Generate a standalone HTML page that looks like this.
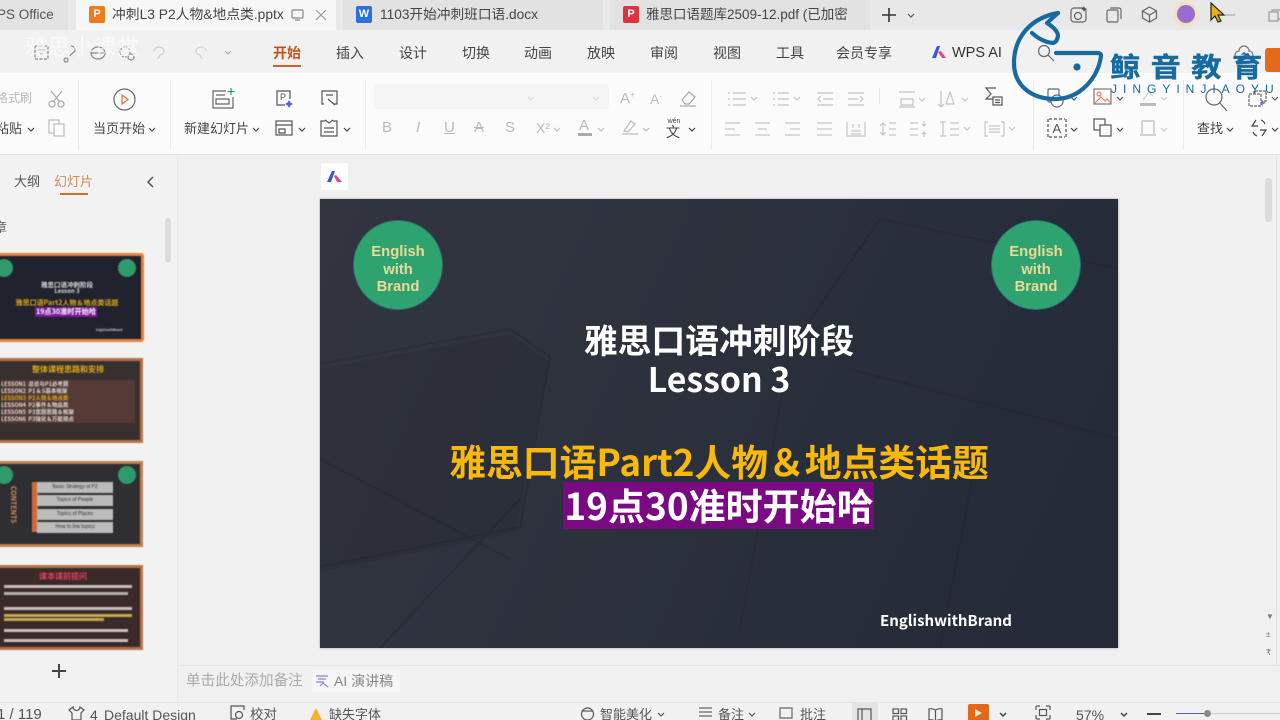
<!DOCTYPE html>
<html lang="zh">
<head>
<meta charset="utf-8">
<style>
html,body{margin:0;padding:0;width:1280px;height:720px;overflow:hidden;background:#f0f0f0}
body{position:relative;font-family:"Liberation Sans","Noto Sans CJK SC",sans-serif;color:#444;filter:blur(.35px)}
.a{position:absolute;white-space:nowrap}
.t{position:absolute;white-space:nowrap;font-size:14px;line-height:20px;color:#444}
.g{color:#b8b8b8}
svg{position:absolute;overflow:visible;fill:none;stroke:#666;stroke-width:1.2}
.sl{font-family:"Noto Sans CJK SC","Liberation Sans",sans-serif;font-weight:700;text-align:center;white-space:nowrap;position:absolute}
.th{position:absolute;left:-10px;width:153px;background:#2d2b30;border:3px solid #c08050;box-sizing:border-box;overflow:hidden;filter:blur(.5px)}
.tt{position:absolute;white-space:nowrap;font-family:"Noto Sans CJK SC","Liberation Sans",sans-serif;font-weight:700}
.dot{position:absolute;width:18px;height:18px;border-radius:50%;background:#2f9a6c}
</style>
</head>
<body>
<!-- tab bar -->
<div class="a" style="left:0;top:0;width:1280px;height:30px;background:#e9e8e8"></div>
<div class="a" style="left:0;top:0;width:68px;height:30px;background:#e3e3e3"></div>
<div class="t" style="left:-3px;top:5px;font-size:13.5px;color:#555">PS Office</div>
<div class="a" style="left:76px;top:0;width:260px;height:30px;background:#f6f6f6"></div>
<div class="a" style="left:89px;top:6px;width:16px;height:17px;background:#ee7a1c;border-radius:2px;color:#fff;font:700 11px/17px 'Liberation Sans';text-align:center">P</div>
<div class="t" style="left:112px;top:5px;font-size:13.800px">冲刺L3 P2人物&amp;地点类.pptx</div>
<svg style="left:291px;top:9px" width="14" height="12"><rect x="1" y="1" width="11" height="8" rx="1" stroke="#888"/><path d="M4 11h5" stroke="#888"/></svg>
<svg style="left:315px;top:9px" width="12" height="12"><path d="M1 1l10 10M11 1L1 11" stroke="#999"/></svg>
<div class="a" style="left:343px;top:0;width:260px;height:30px;background:#e2e2e2"></div>
<div class="a" style="left:356px;top:6px;width:16px;height:17px;background:#2a6fdb;border-radius:2px;color:#fff;font:700 11px/17px 'Liberation Sans';text-align:center">W</div>
<div class="t" style="left:380px;top:5px;font-size:13.700px">1103开始冲刺班口语.docx</div>
<div class="a" style="left:610px;top:0;width:260px;height:30px;background:#e2e2e2"></div>
<div class="a" style="left:623px;top:6px;width:16px;height:17px;background:#e0313f;border-radius:2px;color:#fff;font:700 11px/17px 'Liberation Sans';text-align:center">P</div>
<div class="t" style="left:646px;top:5px;font-size:13.500px;width:212px;overflow:hidden">雅思口语题库2509-12.pdf (已加密</div>
<svg style="left:881px;top:7px" width="16" height="16"><path d="M8 1v14M1 8h14" stroke="#333" stroke-width="1.6"/></svg>
<svg style="left:907px;top:13px" width="8" height="5"><path d="M1 1l3 3 3-3" stroke="#555"/></svg>
<!-- right top icons -->
<svg style="left:1070px;top:5px" width="18" height="18"><rect x="1" y="3" width="15" height="14" rx="3"/><circle cx="8" cy="11" r="3.5"/><path d="M14 1l1 2 2 1-2 1-1 2-1-2-2-1 2-1z" fill="#555" stroke="none"/></svg>
<svg style="left:1106px;top:7px" width="16" height="16"><rect x="1" y="3" width="11" height="12" rx="1.5"/><path d="M4 1h9a2 2 0 0 1 2 2v9"/></svg>
<svg style="left:1141px;top:6px" width="17" height="17"><path d="M8.5 1l7 4v7l-7 4-7-4V5zM1.5 5l7 4 7-4M8.5 9v7"/></svg>
<div class="a" style="left:1173px;top:1px;width:26px;height:26px;border-radius:50%;background:#f0e2c8"></div>
<div class="a" style="left:1177px;top:5px;width:18px;height:18px;border-radius:50%;background:#9a6cd0"></div>
<svg style="left:1210px;top:2px" width="26" height="22"><path d="M1 1l0 17 4-4 3 6 3-1-3-6h6z" fill="#eab308" stroke="#222" stroke-width="1.2"/><path d="M15 13h10" stroke="#aaa"/></svg>
<svg style="left:1268px;top:9px" width="14" height="14"><rect x="1" y="3" width="9" height="9" stroke="#999"/><path d="M4 3V1h9v9h-3" stroke="#999"/></svg>

<!-- menu bar -->
<div class="a" style="left:0;top:30px;width:1280px;height:43px;background:#f1f1f1;border-bottom:1px solid #e2e2e2"></div>
<svg style="left:34px;top:45px" width="16" height="16"><rect x="1" y="1" width="13" height="13" stroke="#888" stroke-dasharray="3 1.5"/><path d="M4 5h7M6 9h3" stroke="#888"/></svg>
<svg style="left:63px;top:45px" width="16" height="16"><path d="M8 1a4 4 0 0 1 4 4c0 3-4 3-5 6M3 13a2 2 0 1 0 .1 0" stroke="#888"/></svg>
<svg style="left:89px;top:45px" width="18" height="16"><ellipse cx="9" cy="8" rx="7" ry="6" stroke="#888"/><path d="M2 8h14" stroke="#888"/></svg>
<svg style="left:118px;top:45px" width="18" height="16"><circle cx="7" cy="7" r="5" stroke="#999" stroke-dasharray="2 1"/><circle cx="13" cy="12" r="3" stroke="#888"/></svg>
<svg style="left:152px;top:46px" width="14" height="14"><path d="M2 5a5 4 0 1 1 6 4L6 13" stroke="#ccc"/></svg>
<svg style="left:194px;top:46px" width="14" height="14"><path d="M12 5a5 4 0 1 0-6 4l2 4" stroke="#d2d2d2"/></svg>
<svg style="left:224px;top:50px" width="8" height="5"><path d="M1 1l3 3 3-3" stroke="#aaa"/></svg>
<div class="a" style="left:25px;top:35px;font-size:22px;line-height:26px;color:#fff;opacity:.6;letter-spacing:1px">雅思小课堂</div>
<div class="t" style="left:273px;top:43px;font-weight:700;color:#c4511d">开始</div>
<div class="a" style="left:273px;top:65px;width:28px;height:2px;background:#c9632a"></div>
<div class="t" style="left:336px;top:43px">插入</div>
<div class="t" style="left:399px;top:43px">设计</div>
<div class="t" style="left:462px;top:43px">切换</div>
<div class="t" style="left:524px;top:43px">动画</div>
<div class="t" style="left:587px;top:43px">放映</div>
<div class="t" style="left:650px;top:43px">审阅</div>
<div class="t" style="left:713px;top:43px">视图</div>
<div class="t" style="left:776px;top:43px">工具</div>
<div class="t" style="left:836px;top:43px">会员专享</div>
<svg style="left:931px;top:45px" width="16" height="14" ><path d="M1 13L6 1h3l-4 12z" fill="#3a55d8" stroke="none"/><path d="M7 7l3-1 5 7h-4z" fill="#e0488c" stroke="none"/></svg>
<div class="t" style="left:952px;top:43px;color:#333;font-size:14.500px">WPS AI</div>
<svg style="left:1037px;top:44px" width="18" height="18"><circle cx="7" cy="7" r="5.5"/><path d="M11 11l6 6"/></svg>
<svg style="left:1234px;top:45px" width="20" height="18"><path d="M5 14a4 4 0 0 1 0-8 5 5 0 0 1 10 0 4 4 0 0 1 0 8z" stroke="#777"/><path d="M10 14V8M7.500 10L10 7.500l2.500 2.500" stroke="#3a6fd8"/></svg>
<div class="a" style="left:1265px;top:48px;width:20px;height:24px;background:#e26a1a;border-radius:3px"></div>

<!-- ribbon -->
<div class="a" style="left:0;top:73px;width:1280px;height:81px;background:#fbfbfb;border-bottom:1px solid #e2e2e2"></div>
<div class="a" style="left:78px;top:80px;width:1px;height:70px;background:#ebebeb"></div>
<div class="a" style="left:170px;top:80px;width:1px;height:70px;background:#ebebeb"></div>
<div class="a" style="left:365px;top:80px;width:1px;height:70px;background:#ebebeb"></div>
<div class="a" style="left:711px;top:80px;width:1px;height:70px;background:#ebebeb"></div>
<div class="a" style="left:1033px;top:80px;width:1px;height:70px;background:#ebebeb"></div>
<div class="a" style="left:1183px;top:80px;width:1px;height:70px;background:#ebebeb"></div>
<div class="a" style="left:879px;top:88px;width:1px;height:16px;background:#e4e4e4"></div>

<div class="t g" style="left:-4px;top:88px;font-size:12px">格式刷</div>
<svg style="left:48px;top:90px" width="18" height="18"><path d="M3 1l9 11M14 1L5 12" stroke="#aaa"/><circle cx="4" cy="14" r="3" stroke="#aaa"/><circle cx="13" cy="14" r="3" stroke="#aaa"/></svg>
<div class="t" style="left:-4px;top:119px;font-size:13px">粘贴</div>
<svg style="left:27px;top:127px" width="8" height="5"><path d="M1 1l3 3 3-3" stroke="#444"/></svg>
<svg style="left:48px;top:119px" width="18" height="18"><rect x="1" y="1" width="10" height="13" stroke="#bbb"/><rect x="6" y="5" width="10" height="12" fill="#fbfbfb" stroke="#bbb"/></svg>

<svg style="left:113px;top:88px" width="23" height="23"><circle cx="11.500" cy="11.500" r="10.500" stroke="#666"/><path d="M9 7l6 4.500-6 4.500z" stroke="#e4703a"/></svg>
<div class="t" style="left:93px;top:119px;font-size:13px">当页开始</div>
<svg style="left:148px;top:127px" width="8" height="5"><path d="M1 1l3 3 3-3" stroke="#444"/></svg>

<svg style="left:212px;top:88px" width="24" height="22"><path d="M14 3H1v17h20V9" stroke="#666"/><path d="M4 7h9M4 11h13v5H4z" stroke="#666"/><path d="M19 0v7M15.500 3.500h7" stroke="#2f9a6c"/></svg>
<div class="t" style="left:184px;top:119px;font-size:13px">新建幻灯片</div>
<svg style="left:252px;top:127px" width="8" height="5"><path d="M1 1l3 3 3-3" stroke="#444"/></svg>
<svg style="left:275px;top:89px" width="19" height="19"><path d="M15 10V2H2v14h8" stroke="#555"/><text x="5" y="11" font-size="9" fill="#555" stroke="none">P</text><path d="M14 11l1.500 2.500L18 15l-2.500 1.500L14 19l-1.500-2.500L10 15l2.500-1.500z" fill="#5a63d8" stroke="none"/></svg>
<svg style="left:320px;top:89px" width="19" height="19"><path d="M4 15H2V2h15v13h-3M6 6h7M8 10l7 6" stroke="#555"/></svg>
<svg style="left:275px;top:120px" width="18" height="16"><rect x="1" y="1" width="16" height="14" stroke="#555"/><path d="M1 5h16M4 9h6v4H4z" stroke="#555"/></svg>
<svg style="left:298px;top:127px" width="8" height="5"><path d="M1 1l3 3 3-3" stroke="#444"/></svg>
<svg style="left:320px;top:119px" width="18" height="18"><path d="M5 2H1v15h16V2h-4M5 1l4 3 4-3M4 9h10M4 13h10" stroke="#555"/></svg>
<svg style="left:343px;top:127px" width="8" height="5"><path d="M1 1l3 3 3-3" stroke="#444"/></svg>

<div class="a" style="left:374px;top:84px;width:235px;height:25px;background:#f5f5f5;border-radius:3px"></div>
<svg style="left:527px;top:96px" width="8" height="5"><path d="M1 1l3 3 3-3" stroke="#ddd"/></svg>
<svg style="left:592px;top:96px" width="8" height="5"><path d="M1 1l3 3 3-3" stroke="#ddd"/></svg>
<div class="t g" style="left:382px;top:118px;font-size:15px">B</div>
<div class="t g" style="left:416px;top:118px;font-size:15px;font-style:italic">I</div>
<div class="t g" style="left:444px;top:118px;font-size:15px;text-decoration:underline">U</div>
<div class="t g" style="left:474px;top:118px;font-size:15px;text-decoration:line-through">A</div>
<div class="t g" style="left:505px;top:118px;font-size:15px">S</div>
<div class="t g" style="left:536px;top:118px;font-size:14px">X²</div>
<svg style="left:553px;top:127px" width="8" height="5"><path d="M1 1l3 3 3-3" stroke="#bbb"/></svg>
<div class="t g" style="left:579px;top:116px;font-size:15px">A</div>
<div class="a" style="left:578px;top:133px;width:14px;height:3px;background:#aaa"></div>
<svg style="left:597px;top:127px" width="8" height="5"><path d="M1 1l3 3 3-3" stroke="#bbb"/></svg>
<svg style="left:621px;top:119px" width="18" height="17"><path d="M3 12L10 2l4 3-7 8zM1 15h16" stroke="#bbb"/></svg>
<svg style="left:642px;top:127px" width="8" height="5"><path d="M1 1l3 3 3-3" stroke="#bbb"/></svg>
<div class="t" style="left:620px;top:89px;font-size:15px;color:#bbb">A<sup style="font-size:8px;line-height:0">+</sup></div>
<div class="t" style="left:650px;top:89px;font-size:14px;color:#bbb">A<sup style="font-size:8px;line-height:0">-</sup></div>
<svg style="left:679px;top:89px" width="18" height="18"><path d="M3 11l7-8 6 5-6 7H6z" stroke="#aaa"/><path d="M1 17h16" stroke="#aaa"/></svg>
<div class="a" style="left:666px;top:118px;font-size:7px;line-height:8px;color:#444;width:16px;text-align:center">wén</div>
<div class="a" style="left:666px;top:124px;font-size:14px;line-height:16px;color:#444">文</div>
<svg style="left:688px;top:127px" width="8" height="5"><path d="M1 1l3 3 3-3" stroke="#444"/></svg>

<!-- paragraph icons row 1 -->
<svg style="left:727px;top:90px" width="140" height="18">
<g stroke="#c4c4c4"><path d="M1 3h2M1 9h2M1 15h2M6 3h13M6 9h13M6 15h13"/><path d="M24 7l3 3 3-3"/>
<path d="M46 3h2M46 9h2M46 15h2M51 3h11M51 9h11M51 15h11"/><path d="M67 7l3 3 3-3"/>
<path d="M90 3h16M96 9h10M90 15h16M94 6l-3 3 3 3"/>
<path d="M121 3h16M121 9h10M121 15h16M133 6l3 3-3 3"/></g></svg>
<svg style="left:898px;top:90px" width="80" height="18"><g stroke="#c4c4c4"><path d="M1 2h16M3 9h12v6H3zM1 17h16"/><path d="M21 8l3 3 3-3"/><path d="M43 1v16M40 14l3 3 3-3M52 2l-4 12h8z"/><path d="M64 8l3 3 3-3"/></g></svg>
<svg style="left:984px;top:87px" width="20" height="20"><path d="M12 1H2l5 6-5 5h7" stroke="#555"/><rect x="9" y="10" width="9" height="8" stroke="#555"/><path d="M11 13h5M11 15.500h5" stroke="#555"/></svg>
<!-- row 2 -->
<svg style="left:725px;top:120px" width="295" height="18"><g stroke="#c6c6c6"><path d="M0 3h15M0 9h10M0 15h15"/><path d="M30 3h15M33 9h9M30 15h15"/><path d="M60 3h15M65 9h10M60 15h15"/><path d="M92 3h15M92 9h15M92 15h15"/>
<path d="M122 2v14h18V2M128 4v4M134 4v4M126 11h10M126 14h10"/>
<path d="M158 4v10M155 6l3-3 3 3M155 12l3 3 3-3M164 3h7M164 9h7M164 15h7"/>
<path d="M185 3h8M185 9h8M185 15h8M199 1v5M197 4l2 2 2-2M199 17v-5M197 14l2-2 2 2"/>
<path d="M218 2v14M215 2h6M215 16h6M225 3h9M225 9h9M225 15h9M239 7l3 3 3-3"/>
<path d="M263 2h-3v14h3M276 2h3v14h-3M264 6h11M264 9h11M264 12h11"/><path d="M284 7l3 3 3-3"/></g></svg>

<!-- right ribbon -->
<svg style="left:1046px;top:87px" width="24" height="22"><rect x="2" y="2" width="11" height="13" rx="1" stroke="#666"/><circle cx="11" cy="14" r="6" fill="#fbfbfb" stroke="#666"/></svg>
<svg style="left:1070px;top:96px" width="8" height="5"><path d="M1 1l3 3 3-3" stroke="#555"/></svg>
<svg style="left:1093px;top:88px" width="20" height="18"><rect x="1" y="1" width="17" height="15" stroke="#777"/><circle cx="6" cy="6" r="2" stroke="#e58060"/><path d="M2 15l6-6 4 4 2-2 4 4" stroke="#e58060"/></svg>
<svg style="left:1116px;top:96px" width="8" height="5"><path d="M1 1l3 3 3-3" stroke="#555"/></svg>
<div class="a" style="left:1140px;top:103px;width:16px;height:3px;background:#bbb"></div>
<svg style="left:1141px;top:90px" width="14" height="12"><path d="M2 10l6-8 4 4" stroke="#ccc"/></svg>
<svg style="left:1160px;top:96px" width="8" height="5"><path d="M1 1l3 3 3-3" stroke="#ccc"/></svg>
<svg style="left:1205px;top:88px" width="24" height="24"><circle cx="9" cy="9" r="8" stroke="#666"/><path d="M15 15l7 8" stroke="#666"/></svg>
<svg style="left:1248px;top:90px" width="20" height="18"><path d="M6 4V1h12v10h-4M1 4h12v12H1z" stroke="#666" stroke-dasharray="3 1"/><path d="M13 10l5 3-3 1-1 3z" fill="#7b6ad8" stroke="none"/></svg>
<svg style="left:1271px;top:96px" width="8" height="5"><path d="M1 1l3 3 3-3" stroke="#555"/></svg>
<svg style="left:1047px;top:118px" width="20" height="20"><path d="M2 1h16M2 19h16M1 1v18M19 1v18" stroke="#555" stroke-dasharray="3 2"/><text x="5.500" y="15" font-size="13" fill="#555" stroke="none">A</text></svg>
<svg style="left:1070px;top:127px" width="8" height="5"><path d="M1 1l3 3 3-3" stroke="#444"/></svg>
<svg style="left:1093px;top:118px" width="20" height="20"><rect x="1" y="1" width="11" height="11" stroke="#555"/><rect x="7" y="7" width="11" height="11" fill="#fbfbfb" stroke="#555"/></svg>
<svg style="left:1116px;top:127px" width="8" height="5"><path d="M1 1l3 3 3-3" stroke="#444"/></svg>
<svg style="left:1139px;top:119px" width="18" height="18"><path d="M3 15V2h12v13M1 16h16" stroke="#c4c4c4" stroke-width="1.400"/></svg>
<svg style="left:1160px;top:127px" width="8" height="5"><path d="M1 1l3 3 3-3" stroke="#ccc"/></svg>
<div class="t" style="left:1197px;top:119px;font-size:13px">查找</div>
<svg style="left:1226px;top:127px" width="8" height="5"><path d="M1 1l3 3 3-3" stroke="#444"/></svg>
<svg style="left:1250px;top:118px" width="18" height="20"><path d="M6 2L2 8h6M12 18l4-6h-6M3 14a7 7 0 0 0 4 4M15 6a7 7 0 0 0-4-4" stroke="#444"/></svg>
<svg style="left:1271px;top:127px" width="8" height="5"><path d="M1 1l3 3 3-3" stroke="#444"/></svg>

<!-- left pane -->
<div class="a" style="left:0;top:155px;width:177px;height:547px;background:#f2f2f2"></div>
<div class="a" style="left:177px;top:155px;width:1px;height:547px;background:#e9e9e9"></div>
<div class="t" style="left:14px;top:172px;font-size:13px;color:#555">大纲</div>
<div class="t" style="left:54px;top:172px;font-size:13px;color:#d08a5c">幻灯片</div>
<div class="a" style="left:60px;top:193px;width:28px;height:2px;background:#c96f35"></div>
<svg style="left:146px;top:176px" width="8" height="12"><path d="M7 1L2 6l5 5" stroke="#555" stroke-width="1.500"/></svg>
<div class="t" style="left:-6px;top:218px;font-size:13px;color:#666">章</div>
<div class="a" style="left:165px;top:218px;width:6px;height:45px;background:#dcdcdc;border-radius:3px"></div>

<!-- thumb 1 -->
<div class="th" style="top:253px;height:89px;width:154px;border:3px solid #e8813a;border-radius:3px;background:#20232e">
  <div class="dot" style="left:2px;top:3px"></div><div class="dot" style="left:125px;top:3px"></div>
  <div class="tt" style="left:0;width:148px;top:23px;font-size:6.500px;line-height:10px;color:#ddd;text-align:center">雅思口语冲刺阶段</div>
  <div class="tt" style="left:0;width:148px;top:30px;font-size:6px;line-height:10px;color:#ddd;text-align:center">Lesson 3</div>
  <div class="tt" style="left:0;width:148px;top:42px;font-size:7px;line-height:10px;color:#e0a814;text-align:center">雅思口语Part2人物＆地点类话题</div>
  <div class="tt" style="left:42px;width:62px;top:51px;font-size:7.200px;line-height:10px;color:#fff;background:#7a1a9a;text-align:center">19点30准时开始哈</div>
  <div class="tt" style="left:103px;top:72px;font-size:3px;line-height:5px;color:#ccc">EnglishwithBrand</div>
</div>
<!-- thumb 2 -->
<div class="th" style="top:358px;height:85px;border:3px solid #b5734a;background:#37302f">
  <div class="tt" style="left:25px;width:100px;top:3px;font-size:8px;line-height:11px;color:#e0a814;text-align:center">整体课程思路和安排</div>
  <div class="a" style="left:8px;top:19px;width:134px;height:43px;background:#553b36"></div>
  <div class="tt" style="left:8px;top:20px;font-size:5.500px;line-height:7px;color:#ddd;white-space:pre">LESSON1  总论与P1必考题
LESSON2  P1 &amp; S基本框架
<span style="color:#e0a814">LESSON3  P2人物＆地点类</span>
LESSON4  P2事件＆物品类
LESSON5  P3宽题思路＆框架
LESSON6  P3强化＆万能观点</div>
</div>
<!-- thumb 3 -->
<div class="th" style="top:461px;height:86px;border:3px solid #c08050;background:#2f2e33">
  <div class="dot" style="left:2px;top:2px"></div><div class="dot" style="left:125px;top:2px"></div>
  <div class="tt" style="left:15px;top:22px;font-size:7px;line-height:9px;color:#c98a5a;writing-mode:vertical-rl">CONTENTS</div>
  <div class="a" style="left:39px;top:18px;width:6px;height:50px;background:#d06a3a"></div>
  <div class="a" style="left:44px;top:18px;width:76px;height:11px;background:#bbb;font:5px/11px 'Liberation Sans';color:#333;text-align:center">Basic Strategy of P2</div>
  <div class="a" style="left:44px;top:31px;width:76px;height:11px;background:#bbb;font:5px/11px 'Liberation Sans';color:#333;text-align:center">Topics of People</div>
  <div class="a" style="left:44px;top:45px;width:76px;height:11px;background:#bbb;font:5px/11px 'Liberation Sans';color:#333;text-align:center">Topics of Places</div>
  <div class="a" style="left:44px;top:58px;width:76px;height:11px;background:#bbb;font:5px/11px 'Liberation Sans';color:#333;text-align:center">How to link topics</div>
</div>
<!-- thumb 4 -->
<div class="th" style="top:565px;height:85px;border:3px solid #b5734a;background:#3a2a2a">
  <div class="tt" style="left:25px;width:90px;top:3px;font-size:8px;line-height:11px;color:#e0405a;text-align:center">课本课前提问</div>
  <div class="a" style="left:11px;top:17px;width:128px;height:3px;background:#c8bebe"></div>
  <div class="a" style="left:11px;top:24px;width:124px;height:3px;background:#b8aeae"></div>
  <div class="a" style="left:11px;top:39px;width:128px;height:3px;background:#c8bebe"></div>
  <div class="a" style="left:11px;top:46px;width:128px;height:3px;background:#c4a850"></div>
  <div class="a" style="left:11px;top:50px;width:100px;height:3px;background:#c4a850"></div>
  <div class="a" style="left:11px;top:61px;width:124px;height:3px;background:#c8bebe"></div>
  <div class="a" style="left:11px;top:71px;width:124px;height:3px;background:#c8bebe"></div>
</div>
<svg style="left:52px;top:664px" width="14" height="14"><path d="M7 0v14M0 7h14" stroke="#444" stroke-width="2"/></svg>

<!-- canvas -->
<div class="a" style="left:321px;top:163px;width:27px;height:27px;background:#fdfdfd;border-radius:2px"></div>
<svg style="left:326px;top:170px" width="17" height="13"><path d="M1 12L6 1h3L5 12z" fill="#3a55d8" stroke="none"/><path d="M8 6l2-1 6 7h-5z" fill="#e0488c" stroke="none"/></svg>

<!-- slide -->
<div class="a" style="left:320px;top:199px;width:798px;height:449px;overflow:hidden;background:linear-gradient(115deg,#32353f 0%,#2d323d 35%,#272d3a 70%,#242a38 100%);box-shadow:0 0 2px #999">
  <svg style="left:0;top:0" width="798" height="449"><g stroke="#20232c" stroke-width="2" opacity=".28">
    <path d="M0 165L190 130l40 28-30 170-200 40"/>
    <path d="M420 430L470 150 560 20 800 70"/>
    <path d="M60 449L200 300M0 260L190 360"/>
    <path d="M530 170L800 240M620 449l40-210"/></g>
    <path d="M0 170L190 135l40 28-35 170-195 40z" fill="#23262f" stroke="none" opacity=".22"/>
  </svg>
  <div class="a" style="left:34px;top:22px;width:88px;height:88px;border-radius:50%;background:#2fa36f;box-shadow:0 0 0 1px #2b6f70;color:#ecd996;font:700 14.800px/17.700px 'Liberation Sans';text-align:center;white-space:normal;padding-top:23px;box-sizing:border-box">English<br>with<br>Brand</div>
  <div class="a" style="left:672px;top:22px;width:88px;height:88px;border-radius:50%;background:#2fa36f;box-shadow:0 0 0 1px #2b6f70;color:#ecd996;font:700 14.800px/17.700px 'Liberation Sans';text-align:center;white-space:normal;padding-top:23px;box-sizing:border-box">English<br>with<br>Brand</div>
  <div class="sl" style="left:0;width:798px;top:116px;font-size:33.800px;line-height:48px;color:#fff">雅思口语冲刺阶段</div>
  <div class="sl" style="left:0;width:798px;top:155px;font-size:33.800px;line-height:48px;color:#fff">Lesson 3</div>
  <div class="sl" style="left:0;width:798px;top:236px;font-size:36.800px;line-height:50px;color:#f9b80c">雅思口语Part2人物＆地点类话题</div>
  <div class="a" style="left:243px;top:283px;width:311px;height:47px;background:#7a0a82"></div>
  <div class="sl" style="left:0;width:798px;top:280px;font-size:37px;line-height:50px;color:#fff">19点30准时开始哈</div>
  <div class="sl" style="left:560px;top:411px;font-size:15px;line-height:22px;color:#fff;font-weight:700">EnglishwithBrand</div>
</div>

<!-- scrollbar -->
<div class="a" style="left:1265px;top:178px;width:7px;height:44px;background:#dcdcdc;border-radius:3px"></div>
<div class="a" style="left:1276px;top:155px;width:1px;height:510px;background:#e4e4e4"></div>
<div class="a" style="left:1266px;top:608px;color:#777;font-size:8px;line-height:18px;white-space:pre">▼
±
₹</div>

<!-- notes -->
<div class="a" style="left:178px;top:665px;width:1102px;height:1px;background:#e4e4e4"></div>
<div class="t" style="left:186px;top:671px;font-size:14.600px;color:#aaa">单击此处添加备注</div>
<div class="a" style="left:312px;top:670px;width:88px;height:22px;background:#f5f5f5"></div>
<svg style="left:315px;top:674px" width="14" height="14"><path d="M1 2h12M3 5h8M1 8h8M5 12l3-3 5 4" stroke="#8a86c8"/></svg>
<div class="t" style="left:334px;top:671px;font-size:14px;color:#888">AI 演讲稿</div>

<!-- status bar -->
<div class="a" style="left:0;top:702px;width:1280px;height:18px;background:#f1f1f1;border-top:1px solid #e3e3e3"></div>
<div class="t" style="left:-3px;top:705px;font-size:15px;color:#555">1 / 119</div>
<svg style="left:68px;top:706px" width="17" height="14"><path d="M5 1L1 4l3 3v7h9V7l3-3-4-3a3 3 0 0 1-7 0z" stroke="#555"/></svg>
<div class="t" style="left:90px;top:705px;font-size:14px;color:#555">4</div>
<div class="t" style="left:104px;top:705px;font-size:14px;color:#555">Default Design</div>
<svg style="left:230px;top:705px" width="15" height="15"><path d="M14 5V1H1v13h6" stroke="#555"/><circle cx="9" cy="10" r="3.500" stroke="#555"/></svg>
<div class="t" style="left:250px;top:705px;font-size:13.500px;color:#555">校对</div>
<svg style="left:310px;top:708px" width="12" height="12"><path d="M6 0l6 12H0z" fill="#f0b429" stroke="none"/></svg>
<div class="t" style="left:329px;top:705px;font-size:13px;color:#555">缺失字体</div>
<svg style="left:580px;top:706px" width="15" height="14"><circle cx="7.500" cy="8" r="6" stroke="#555"/><path d="M2 5h11" stroke="#555"/></svg>
<div class="t" style="left:600px;top:705px;font-size:13px;color:#555">智能美化</div>
<svg style="left:657px;top:712px" width="8" height="5"><path d="M1 1l3 3 3-3" stroke="#555"/></svg>
<svg style="left:698px;top:707px" width="15" height="10"><path d="M1 1h13M1 5h13M1 9h13" stroke="#666"/></svg>
<div class="t" style="left:718px;top:705px;font-size:13px;color:#555">备注</div>
<svg style="left:748px;top:712px" width="8" height="5"><path d="M1 1l3 3 3-3" stroke="#555"/></svg>
<svg style="left:779px;top:707px" width="14" height="14"><path d="M1 1h12v10H1z" stroke="#666"/></svg>
<div class="t" style="left:800px;top:705px;font-size:13px;color:#555">批注</div>
<div class="a" style="left:852px;top:703px;width:26px;height:17px;background:#e4e4e4"></div>
<svg style="left:857px;top:708px" width="15" height="13"><rect x="1" y="1" width="13" height="12" stroke="#555"/><path d="M5 1v12" stroke="#555"/></svg>
<svg style="left:892px;top:708px" width="15" height="13"><rect x="1" y="1" width="5.500" height="4.500" stroke="#555"/><rect x="9" y="1" width="5.500" height="4.500" stroke="#555"/><rect x="1" y="8" width="5.500" height="4.500" stroke="#555"/><rect x="9" y="8" width="5.500" height="4.500" stroke="#555"/></svg>
<svg style="left:928px;top:708px" width="15" height="13"><path d="M7.500 2Q4 0 1 1v11q3-1 6.500 1 3.500-2 6.500-1V1q-3-1-6.500 1zM7.500 2v11" stroke="#555"/></svg>
<div class="a" style="left:968px;top:704px;width:21px;height:16px;background:#e2671a;border-radius:2px 2px 0 0"></div>
<svg style="left:975px;top:709px" width="7" height="8"><path d="M0 0l7 4-7 4z" fill="#fbe6d4" stroke="none"/></svg>
<svg style="left:999px;top:712px" width="8" height="5"><path d="M1 1l3 3 3-3" stroke="#444" stroke-width="1.500"/></svg>
<svg style="left:1035px;top:705px" width="16" height="15"><path d="M1 5V2a1 1 0 0 1 1-1h3M11 1h3a1 1 0 0 1 1 1v3M15 10v3a1 1 0 0 1-1 1h-3M5 14H2a1 1 0 0 1-1-1v-3" stroke="#555"/><rect x="4.500" y="4.500" width="7" height="6" stroke="#555"/></svg>
<div class="t" style="left:1076px;top:705px;font-size:14px;color:#555">57%</div>
<svg style="left:1120px;top:712px" width="8" height="5"><path d="M1 1l3 3 3-3" stroke="#444" stroke-width="1.500"/></svg>
<div class="a" style="left:1147px;top:713px;width:14px;height:2px;background:#444"></div>
<div class="a" style="left:1176px;top:713px;width:28px;height:1px;background:#4a66a8"></div>
<div class="a" style="left:1204px;top:710px;width:7px;height:7px;border-radius:50%;background:#8a8a8a"></div>
<div class="a" style="left:1211px;top:713px;width:69px;height:1px;background:#ccc"></div>

<!-- watermark logo -->
<svg style="left:1010px;top:8px" width="120" height="96"><g stroke="#176aa0" stroke-width="4.200" stroke-linecap="round" stroke-linejoin="round" fill="none">
<path d="M48 5C20 10 4 30 4 55C4 78 22 91 45 91C70 91 88 70 91 48Q91 45 88 45H46"/>
<path d="M48 5L37 15Q48 22 48 28Q47 34 43 35Q32 34 22 25"/></g>
<circle cx="67" cy="59" r="3.600" fill="#176aa0" stroke="none"/></svg>
<div class="a" style="left:1110px;top:50px;font:700 27px/32px 'Noto Sans CJK SC',sans-serif;color:#176aa0;letter-spacing:9.300px;-webkit-text-stroke:.4px #176aa0;transform:scaleX(1.12);transform-origin:left center">鲸音教育</div>
<div class="a" style="left:1111px;top:81px;font:400 12px/16px 'Liberation Sans',sans-serif;color:#176aa0;letter-spacing:6px">JINGYINJIAOYU</div>
</body>
</html>
